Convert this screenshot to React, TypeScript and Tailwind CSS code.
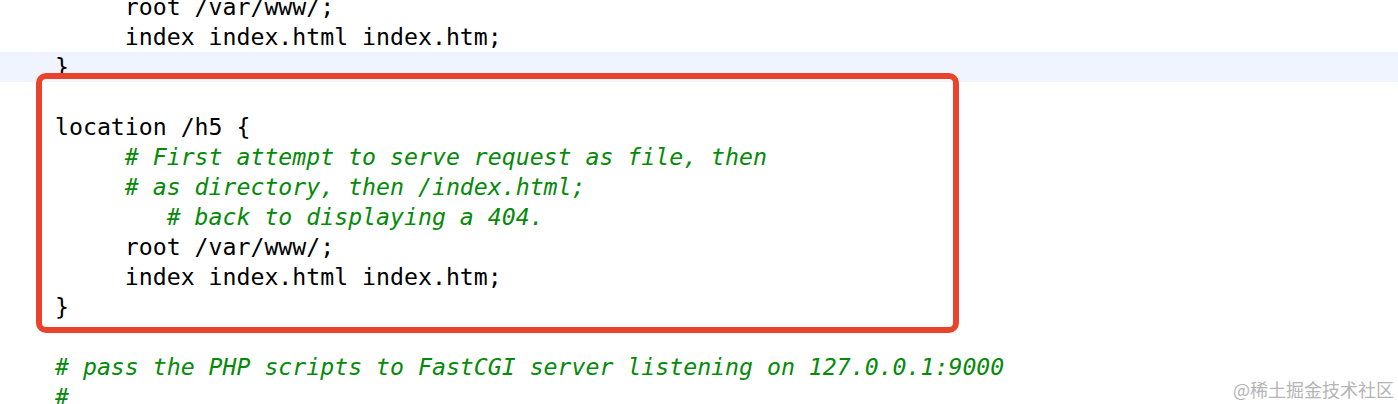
const lines: { text: string; comment?: boolean; active?: boolean }[] = [
  { text: "     root /var/www/;" },
  { text: "     index index.html index.htm;" },
  { text: "}", active: true },
  { text: "" },
  { text: "location /h5 {" },
  { text: "     # First attempt to serve request as file, then", comment: true },
  { text: "     # as directory, then /index.html;", comment: true },
  { text: "        # back to displaying a 404.", comment: true },
  { text: "     root /var/www/;" },
  { text: "     index index.html index.htm;" },
  { text: "}" },
  { text: "" },
  { text: "# pass the PHP scripts to FastCGI server listening on 127.0.0.1:9000", comment: true },
  { text: "#", comment: true },
];

export default function App() {
  return (
    <div className="relative w-full h-[404px] overflow-hidden bg-white">
      <div
        className="-mt-2 text-[23.2px] text-black"
        style={{ fontFamily: '"DejaVu Sans Mono", "Liberation Mono", monospace' }}
      >
        {lines.map((l, i) => (
          <div
            key={i}
            className={`h-[30px] leading-[30px] whitespace-pre pl-[55px] ${l.active ? "bg-[#eff4fe]" : ""} ${
              l.comment ? "italic text-[#068a0a]" : ""
            }`}
          >
            {l.text || " "}
          </div>
        ))}
      </div>

      {/* annotation box */}
      <div className="absolute left-[36px] top-[73px] w-[923px] h-[260px] rounded-[10px] border-[6px] border-[#e9442b]" />

      <div
        className="absolute right-[4px] bottom-[3px] text-[18px] leading-[24px] text-[#b4b4b4]"
        style={{ fontFamily: '"Noto Sans CJK SC", "Noto Sans", sans-serif' }}
      >
        @稀土掘金技术社区
      </div>
    </div>
  );
}
